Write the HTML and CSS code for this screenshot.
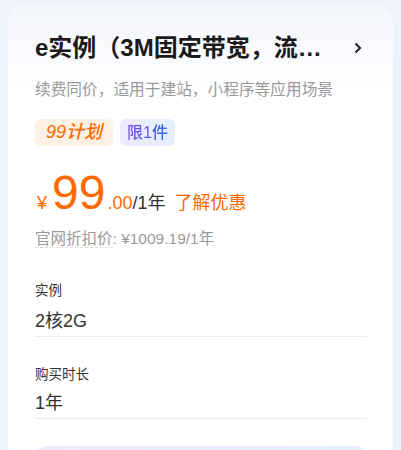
FILE: index.html
```html
<!DOCTYPE html>
<html lang="zh-CN">
    <head>
        <meta charset="UTF-8" />
        <meta name="viewport" content="width=device-width, initial-scale=1.0" />
        <title>e实例</title>
        <link rel="stylesheet" href="styles.css">
    </head>
    <body>
        <div class="card">
            <div class="title-row">
                <div class="title">e实例（3M固定带宽，流…</div>
                <svg class="arrow" width="8" height="12" viewBox="0 0 8 12">
                    <path d="M1.5 1.5 L6 6 L1.5 10.5" fill="none" stroke="#222" stroke-width="2" />
                </svg>
            </div>
            <div class="desc">续费同价，适用于建站，小程序等应用场景</div>
            <div class="tags">
                <span class="tag tag-plan">99计划</span>
                <span class="tag tag-limit"><i>限1件</i></span>
            </div>
            <div class="price-row">
                <span class="yen">¥</span>
                <span class="num">99</span>
                <span class="dec">.00</span>
                <span class="unit">/1年</span>
                <a class="more">了解优惠</a>
            </div>
            <div class="origin"><span class="origin-label">官网折扣价</span>: ¥1009.19/1年</div>

            <div class="field">
                <div class="field-label">实例</div>
                <div class="field-value">2核2G</div>
            </div>
            <div class="field">
                <div class="field-label">购买时长</div>
                <div class="field-value">1年</div>
            </div>

            <div class="buy-box"></div>
        </div>
    </body>
</html>
```

FILE: styles.css
```css
* {
    margin: 0;
    padding: 0;
    box-sizing: border-box;
}
body {
    background-color: #eef2fa;
    font-family: "Liberation Sans", "Noto Sans CJK SC", sans-serif;
    color: #333;
    padding: 3px 8px 0;
}
.card {
    height: 460px;
    border-radius: 20px;
    background: linear-gradient(180deg, #f2f5fc 0, #fff 90px);
    padding: 29px 26px 0 27px;
    overflow: hidden;
}

.title-row {
    display: flex;
    align-items: center;
    justify-content: space-between;
    padding-right: 5px;
}
.title {
    font-size: 24px;
    line-height: 32px;
    font-weight: bold;
    color: #1a1a1a;
    white-space: nowrap;
}
.arrow {
    flex: none;
}

.desc {
    margin-top: 15px;
    font-size: 15.7px;
    line-height: 22px;
    color: #999;
}

.tags {
    display: flex;
    gap: 7px;
    margin-top: 18px;
}
.tag {
    height: 27px;
    line-height: 27px;
    border-radius: 6px;
    font-weight: 500;
}
.tag-plan {
    padding: 0 11px;
    font-size: 18px;
    font-style: italic;
    color: #ff6a00;
    background-color: #fff0e4;
}
.tag-limit {
    padding: 0 7px;
    font-size: 16px;
    background: linear-gradient(90deg, #efeaff, #e4efff);
}
.tag-limit i {
    font-style: normal;
    background: linear-gradient(90deg, #7a4bf5, #2c6cf0);
    -webkit-background-clip: text;
    background-clip: text;
    color: transparent;
}

.price-row {
    display: flex;
    align-items: baseline;
    margin-top: 23px;
    height: 48px;
    line-height: 48px;
    color: #ff6a00;
}
.yen {
    font-size: 18px;
    margin: 0 5px 0 2px;
}
.num {
    font-size: 48px;
}
.dec {
    font-size: 18px;
    margin-left: 2px;
}
.unit {
    font-size: 18px;
    color: #333;
}
.more {
    font-size: 18px;
    margin-left: 9px;
    cursor: pointer;
}

.origin {
    margin-top: 11px;
    font-size: 15.5px;
    line-height: 22px;
    color: #999;
}
.origin-label {
    border-bottom: 1px dashed #ddd;
}

.field {
    margin-top: 31px;
}
.field + .field {
    margin-top: 28px;
}
.field-label {
    font-size: 13.5px;
    line-height: 20px;
    color: #333;
}
.field-value {
    margin-top: 8px;
    font-size: 18px;
    line-height: 24px;
    padding-bottom: 3px;
    border-bottom: 1px solid #ebebeb;
}
.field + .field .field-value {
    margin-top: 6px;
}

.buy-box {
    margin-top: 27px;
    height: 60px;
    border-radius: 12px;
    background: linear-gradient(90deg, #f1ecfd, #e5effd);
}
```
